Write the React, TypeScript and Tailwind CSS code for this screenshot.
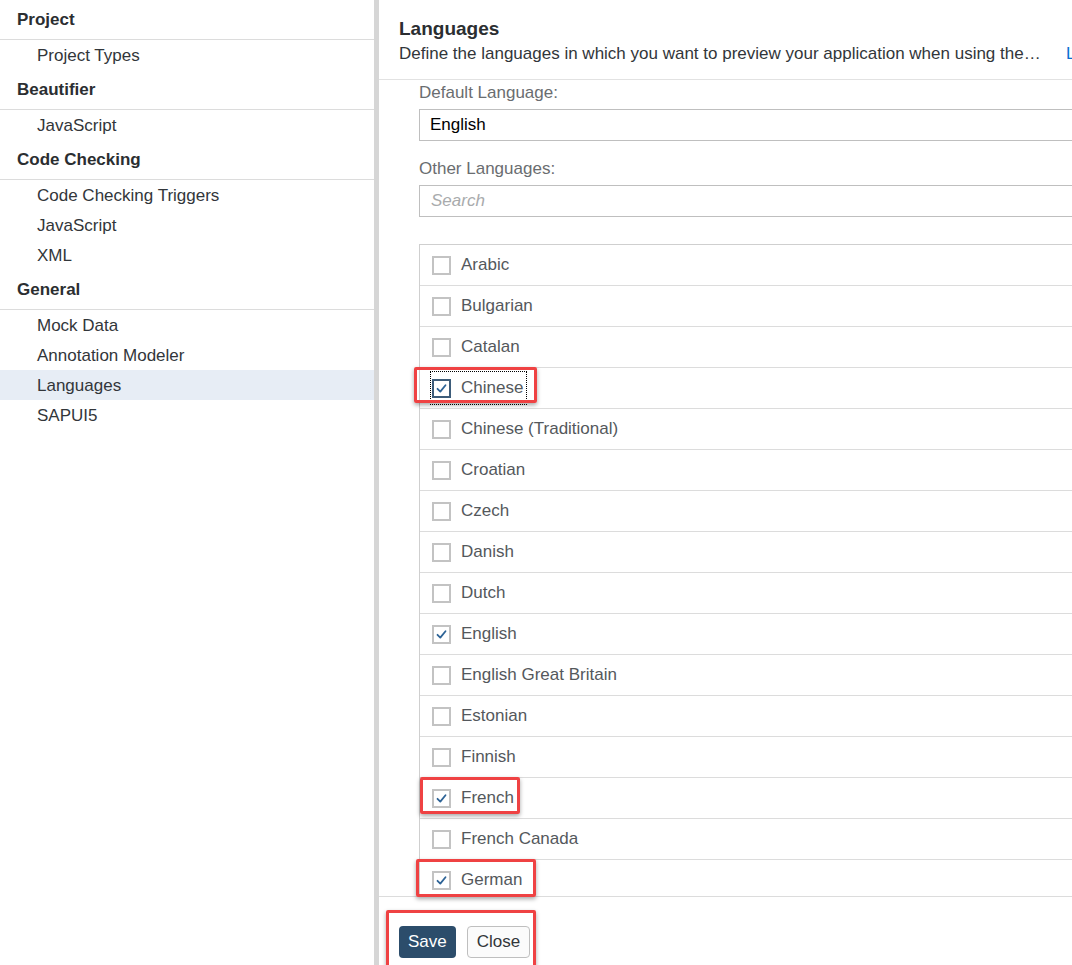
import React, { useState } from 'react';

// Preferences dialog: left settings tree, right "Languages" pane

type NavGroup = { title: string; items: string[] };

const navGroups: NavGroup[] = [
  { title: 'Project', items: ['Project Types'] },
  { title: 'Beautifier', items: ['JavaScript'] },
  { title: 'Code Checking', items: ['Code Checking Triggers', 'JavaScript', 'XML'] },
  { title: 'General', items: ['Mock Data', 'Annotation Modeler', 'Languages', 'SAPUI5'] },
];

const languages = [
  'Arabic',
  'Bulgarian',
  'Catalan',
  'Chinese',
  'Chinese (Traditional)',
  'Croatian',
  'Czech',
  'Danish',
  'Dutch',
  'English',
  'English Great Britain',
  'Estonian',
  'Finnish',
  'French',
  'French Canada',
  'German',
];

const font = { fontFamily: '"Liberation Sans", Arial, sans-serif' };

const CheckBox: React.FC<{ checked: boolean; focused?: boolean }> = ({ checked, focused }) => (
  <span
    className={`flex items-center justify-center w-[19px] h-[19px] border-2 bg-white ${focused ? 'border-[#3d5c7a]' : 'border-[#c3c3c3]'}`}
  >
    {checked && (
      <svg width="13" height="13" viewBox="0 0 13 13">
        <polyline
          points="2.5,6.8 5.3,9.6 10.5,3.2"
          fill="none"
          stroke="#2d6396"
          strokeWidth="1.8"
          strokeLinecap="round"
          strokeLinejoin="round"
        />
      </svg>
    )}
  </span>
);

const Sidebar: React.FC = () => (
  <div className="w-[374px] shrink-0 bg-white">
    {navGroups.map(group => (
      <div key={group.title}>
        <div className="h-[40px] border-b border-[#dcdcdc] flex items-center pl-[17px] pt-[1px] text-[17px] font-bold text-[#2b2e31]">
          {group.title}
        </div>
        {group.items.map(item => (
          <div
            key={item}
            className={`h-[30px] flex items-center pl-[37px] pt-[1px] text-[17px] text-[#32363a] ${item === 'Languages' ? 'bg-[#e7edf5]' : ''}`}
          >
            {item}
          </div>
        ))}
      </div>
    ))}
  </div>
);

const App: React.FC = () => {
  const [selected, setSelected] = useState<string[]>(['Chinese', 'English', 'French', 'German']);

  const toggle = (lang: string) =>
    setSelected(prev => (prev.includes(lang) ? prev.filter(l => l !== lang) : [...prev, lang]));

  return (
    <div className="relative flex h-[965px] w-[1072px] overflow-hidden bg-white" style={font}>
      <Sidebar />
      <div className="w-[5px] shrink-0 bg-[#d6d6d6]" />

      <div className="flex-1 min-w-0 overflow-hidden flex flex-col">
        {/* header */}
        <div className="h-[80px] shrink-0 border-b border-[#e2e2e2] pl-[20px] pt-[17px] w-[900px]">
          <div className="h-[24px] flex items-center text-[19px] font-bold text-[#2b2e31]">Languages</div>
          <div className="h-[25px] flex items-center gap-[21px] text-[17px]">
            <span className="w-[646px] shrink-0 truncate text-[#32363a]">
              Define the languages in which you want to preview your application when using the run configuration
            </span>
            <span className="text-[#0a6ed1]">Learn More</span>
          </div>
        </div>

        {/* form */}
        <div className="pl-[40px] w-[900px]">
          <div className="h-[25px] flex items-center text-[17px] text-[#6a6d70]">Default Language:</div>
          <div className="mt-[4px] h-[32px] border border-[#bfbfbf] flex items-center pl-[10px] text-[17px] text-black">
            English
          </div>
          <div className="mt-[15px] h-[25px] flex items-center text-[17px] text-[#6a6d70]">Other Languages:</div>
          <div className="mt-[4px] h-[32px] border border-[#bfbfbf] flex items-center pl-[11px] text-[17px] italic text-[#a9abad]">
            Search
          </div>

          <div className="mt-[27px] h-[652px] overflow-hidden border-t border-l border-[#cfcfcf]">
            {languages.map(lang => (
              <div
                key={lang}
                onClick={() => toggle(lang)}
                className="h-[41px] border-b border-[#dcdcdc] flex items-center pl-[12px] cursor-pointer"
              >
                <div
                  className={`flex items-center gap-[10px] py-[2px] pr-[2px] ${lang === 'Chinese' ? 'outline outline-1 outline-dotted outline-black outline-offset-[1px]' : ''}`}
                >
                  <CheckBox checked={selected.includes(lang)} focused={lang === 'Chinese'} />
                  <span className="text-[17px] text-[#54585c]">{lang}</span>
                </div>
              </div>
            ))}
          </div>
        </div>

        {/* footer */}
        <div className="flex-1 border-t border-[#dcdcdc] pl-[20px] pt-[29px] flex items-start gap-[11px]">
          <button className="h-[32px] px-[9px] rounded-[4px] bg-[#2c4d6b] text-white text-[17px]">Save</button>
          <button className="h-[32px] px-[9px] rounded-[4px] border border-[#bfbfbf] bg-[#fbfbfb] text-[#32363a] text-[17px]">
            Close
          </button>
        </div>
      </div>

      {/* highlight callouts */}
      <div className="absolute left-[414px] top-[367px] w-[123px] h-[36px] border-[3px] border-[#ef4243] rounded-[2px] shadow-[0_2px_4px_rgba(0,0,0,0.35)] pointer-events-none" />
      <div className="absolute left-[420px] top-[777px] w-[100px] h-[37px] border-[3px] border-[#ef4243] rounded-[2px] shadow-[0_2px_4px_rgba(0,0,0,0.35)] pointer-events-none" />
      <div className="absolute left-[416px] top-[859px] w-[120px] h-[38px] border-[3px] border-[#ef4243] rounded-[2px] shadow-[0_2px_4px_rgba(0,0,0,0.35)] pointer-events-none" />
      <div className="absolute left-[386px] top-[910px] w-[150px] h-[60px] border-[3px] border-[#ef4243] rounded-[2px] shadow-[0_2px_4px_rgba(0,0,0,0.35)] pointer-events-none" />
    </div>
  );
};

export default App;
